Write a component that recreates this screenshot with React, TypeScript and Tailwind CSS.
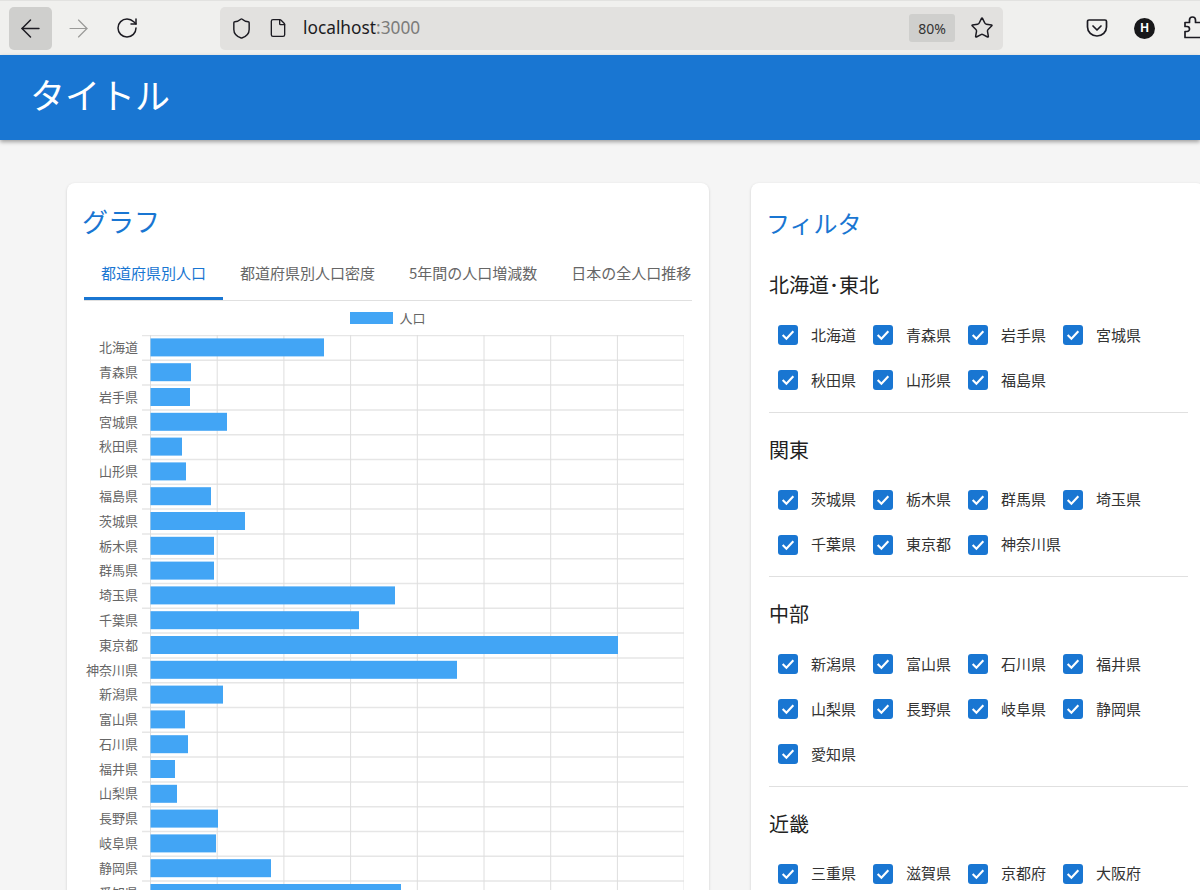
import { ArrowLeft, ArrowRight, File, RotateCw, Shield, Star } from "lucide-react";

const FONT = "[font-family:'Noto_Sans_CJK_JP','Noto_Sans',sans-serif]";

const bars: [string, number][] = [
  ["北海道", 324], ["青森県", 191], ["岩手県", 190], ["宮城県", 227], ["秋田県", 182], ["山形県", 186],
  ["福島県", 211], ["茨城県", 245], ["栃木県", 214], ["群馬県", 214], ["埼玉県", 395], ["千葉県", 359],
  ["東京都", 618], ["神奈川県", 457], ["新潟県", 223], ["富山県", 185], ["石川県", 188], ["福井県", 175],
  ["山梨県", 177], ["長野県", 218], ["岐阜県", 216], ["静岡県", 271], ["愛知県", 401],
];

const regions: [string, string[]][] = [
  ["北海道･東北", ["北海道", "青森県", "岩手県", "宮城県", "秋田県", "山形県", "福島県"]],
  ["関東", ["茨城県", "栃木県", "群馬県", "埼玉県", "千葉県", "東京都", "神奈川県"]],
  ["中部", ["新潟県", "富山県", "石川県", "福井県", "山梨県", "長野県", "岐阜県", "静岡県", "愛知県"]],
  ["近畿", ["三重県", "滋賀県", "京都府", "大阪府"]],
];

const ROW = 24.8;

function Toolbar() {
  return (
    <div className="h-[55px] bg-[#f0f0ee] border-t border-[#e2e2e0] flex items-center text-[#1c1b22] overflow-hidden">
      <div className="w-[43px] h-[43px] ml-[9px] shrink-0 rounded-[5px] bg-[#cfcfcd] flex items-center justify-center">
        <ArrowLeft size={29} strokeWidth={1.25} />
      </div>
      <div className="w-[53px] shrink-0 flex justify-center">
        <ArrowRight size={29} strokeWidth={1} className="text-[#9a9a98]" />
      </div>
      <div className="w-[43px] shrink-0 flex justify-center">
        <RotateCw size={24} strokeWidth={1.5} />
      </div>
      <div className="w-[783px] h-[43px] ml-[72px] shrink-0 rounded-[5px] bg-[#e2e1df] flex items-center">
        <Shield size={23} strokeWidth={1.5} className="ml-[10px]" />
        <File size={20} strokeWidth={1.6} className="ml-[15px]" />
        <span className="ml-[15px] text-[17.3px] [font-family:'Noto_Sans',sans-serif]">
          localhost<span className="text-[#7c7c7a]">:3000</span>
        </span>
        <span className="ml-auto w-[46px] h-[28px] rounded-[3px] bg-[#cfcfcd] flex items-center justify-center text-[14px] text-[#333] [font-family:'Noto_Sans',sans-serif]">
          80%
        </span>
        <Star size={24} strokeWidth={1.5} className="ml-[15px] mr-[9px]" />
      </div>
      <svg className="ml-[83px] shrink-0" width="22" height="22" viewBox="0 0 22 22" fill="none" stroke="currentColor" strokeWidth="1.7" strokeLinecap="round" strokeLinejoin="round">
        <path d="M3 3h16a1.500 1.500 0 0 1 1.500 1.500V10a9.500 9 0 0 1-19 0V4.500A1.500 1.500 0 0 1 3 3z" />
        <path d="M7 9l4 4 4-4" />
      </svg>
      <div className="ml-[26px] w-[21px] h-[21px] shrink-0 rounded-full bg-[#18181a] flex items-center justify-center text-white text-[12px] font-bold [font-family:'Liberation_Sans',sans-serif]">
        H
      </div>
      <svg className="ml-[29px] shrink-0" width="26" height="24" viewBox="0 0 26 24" fill="none" stroke="currentColor" strokeWidth="1.7" strokeLinejoin="round">
        <path d="M1 6.500h4.500V4a3 3 0 0 1 6 0v2.500h6V21.500H1v-6h2a2.500 2.500 0 0 0 0-5H1z" />
      </svg>
    </div>
  );
}

function Chart() {
  const height = bars.length * ROW;
  const grid = [0, 1, 2, 3, 4, 5, 6, 7, 8];
  return (
    <div>
      <div className="h-[34px] flex items-center justify-center gap-[6px] text-[13px] text-[#666]">
        <span className="w-[43px] h-[12px] bg-[#42a5f5]" />
        <span>人口</span>
      </div>
      <div className="flex">
        <div className="w-[54px] shrink-0 mr-[4px] -mt-[0.5px]">
          {bars.map(([name]) => (
            <div key={name} className="h-[24.8px] flex items-center justify-end text-[13px] text-[#666] whitespace-nowrap">
              {name}
            </div>
          ))}
        </div>
        <svg width="542" height={height + 1} className="shrink-0">
          {bars.map((_, i) => (
            <line key={i} x1="0" x2="542" y1={i * ROW + 0.5} y2={i * ROW + 0.5} stroke="#e6e6e6" strokeWidth="1.5" />
          ))}
          {grid.map((n) => (
            <line key={n} x1={8.5 + n * 66.7} x2={8.5 + n * 66.7} y1="0" y2={height} stroke="#dedede" />
          ))}
          {bars.map(([name, end], i) => (
            <rect key={name} x="8.5" y={i * ROW + 3.4} width={end - 150.5} height="18" fill="#42a5f5" />
          ))}
        </svg>
      </div>
    </div>
  );
}

function GraphCard() {
  const tabs = ["都道府県別人口", "都道府県別人口密度", "5年間の人口増減数", "日本の全人口推移"];
  return (
    <div className="w-[642px] shrink-0 bg-white rounded-lg shadow-[0_1px_3px_rgba(0,0,0,0.16)] pt-[14px] px-[17px]">
      <h2 className="h-[46px] -ml-[2px] flex items-center text-[26px] font-normal text-[#1976d2]">グラフ</h2>
      <div className="mt-[9px] h-[49px] flex overflow-hidden border-b border-[#e0e0e0]">
        {tabs.map((tab, i) => (
          <div
            key={tab}
            className={
              i === 0
                ? "h-[48px] px-[17px] pb-[3px] shrink-0 flex items-center text-[15px] text-[#1976d2] border-b-[3px] border-[#1976d2]"
                : "h-[48px] px-[17px] pb-[3px] shrink-0 flex items-center text-[15px] text-[#666] border-b-[3px] border-transparent"
            }
          >
            {tab}
          </div>
        ))}
      </div>
      <Chart />
    </div>
  );
}

function CheckItem({ name }: { name: string }) {
  return (
    <label className="h-[45px] w-[95px] flex items-center">
      <span className="ml-[10px] w-[20px] h-[20px] shrink-0 rounded-[3px] bg-[#1976d2] flex items-center justify-center">
        <svg width="16" height="16" viewBox="0 0 15 15" fill="none" stroke="white" strokeWidth="2">
          <path d="M2.500 7.500l3.500 3.500 6.500-7" />
        </svg>
      </span>
      <span className="ml-[13px] text-[15px] text-[#333] whitespace-nowrap">{name}</span>
    </label>
  );
}

function FilterCard() {
  return (
    <div className="w-[453px] shrink-0 bg-white rounded-lg shadow-[0_1px_3px_rgba(0,0,0,0.16)] pt-[17px] pl-[18px] pr-[16px]">
      <h2 className="h-[46px] -ml-[3px] flex items-center text-[24px] font-normal text-[#1976d2]">フィルタ</h2>
      <div className="mt-[24px] w-[419px]">
        {regions.map(([title, items], i) => (
          <section key={title} className={i < regions.length - 1 ? "pb-[9px] mb-[22px] border-b border-[#e0e0e0]" : ""}>
            <h3 className="h-[30px] flex items-center text-[20px] font-normal text-[#222]">{title}</h3>
            <div className="mt-[12.500px] -ml-[1px] grid grid-cols-[repeat(4,95px)]">
              {items.map((name) => (
                <CheckItem key={name} name={name} />
              ))}
            </div>
          </section>
        ))}
      </div>
    </div>
  );
}

export default function App() {
  return (
    <div className={`w-[1200px] h-[890px] overflow-hidden bg-[#f5f5f5] ${FONT}`}>
      <Toolbar />
      <header className="relative h-[85px] bg-[#1976d2] shadow-[0_2px_4px_rgba(0,0,0,0.35)] flex items-center pl-[30px] pb-[6px]">
        <h1 className="text-[35px] font-normal text-white">タイトル</h1>
      </header>
      <main className="pt-[43px] pl-[67px] flex gap-[42px]">
        <GraphCard />
        <FilterCard />
      </main>
    </div>
  );
}
